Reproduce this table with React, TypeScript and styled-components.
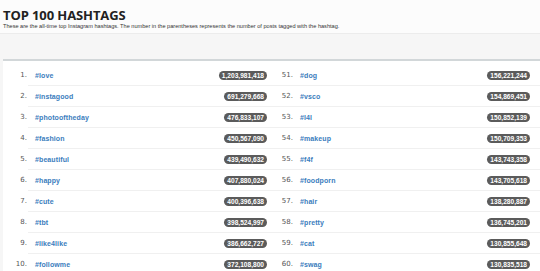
import React from 'react';
import styled, { createGlobalStyle } from 'styled-components';

const GlobalStyle = createGlobalStyle`
  html, body {
    margin: 0;
    padding: 0;
    background: #f6f6f6;
  }
  body {
    font-family: "DejaVu Sans", Verdana, sans-serif;
    overflow: hidden;
  }
`;

const Page = styled.div`
  width: 540px;
  height: 271px;
  overflow: hidden;
  background: #f6f6f6;
`;

const Header = styled.header`
  background: #fcfcfc;
  border-bottom: 1px solid #ececec;
  padding: 7px 3px 0;
  height: 26px;
`;

const Title = styled.h1`
  margin: 0;
  font-family: "Open Sans", "Noto Sans", sans-serif;
  font-weight: 700;
  font-size: 13px;
  line-height: 16px;
  color: #222;
  letter-spacing: -0.1px;
`;

const Subtitle = styled.p`
  margin: 0;
  font-family: "Liberation Sans", Arial, sans-serif;
  font-size: 5.6px;
  line-height: 7px;
  color: #333;
`;

const Body = styled.main`
  padding: 25px 0 0 3px;
`;

const Panel = styled.section`
  background: #fff;
  border-top: 2px solid #d2d7d9;
  display: grid;
  grid-template-columns: 267px 1fr;
  padding-top: 4px;
`;

const Column = styled.ol`
  list-style: none;
  margin: 0;
  padding: 0;
`;

const Row = styled.li<{ $side: 'left' | 'right' }>`
  display: flex;
  height: 21px;
  border-bottom: ${({ $side }) => ($side === 'right' ? '1px solid #f0f0f0' : 'none')};
  box-sizing: border-box;
`;

const Rank = styled.span<{ $side: 'left' | 'right' }>`
  width: ${({ $side }) => ($side === 'right' ? '23px' : '24px')};
  flex: none;
  text-align: right;
  font-size: 7px;
  color: #555;
  line-height: 21px;
`;

const Entry = styled.div<{ $side: 'left' | 'right' }>`
  flex: 1;
  display: flex;
  align-items: center;
  justify-content: space-between;
  margin-left: ${({ $side }) => ($side === 'right' ? '0' : '1px')};
  padding: ${({ $side }) => ($side === 'right' ? '0 10px 0 7px' : '0 3px 0 7px')};
  border-bottom: ${({ $side }) => ($side === 'left' ? '1px solid #f0f0f0' : 'none')};
`;

const Tag = styled.a`
  font-family: "Liberation Sans", Arial, sans-serif;
  font-size: 7px;
  font-weight: 700;
  color: #3b7dbd;
  text-decoration: none;
  letter-spacing: 0.1px;
`;

const Count = styled.span`
  background: #5b5b5b;
  color: #fff;
  font-family: "Liberation Sans", Arial, sans-serif;
  font-weight: 700;
  font-size: 6.6px;
  line-height: 9px;
  height: 9px;
  padding: 0 3px;
  border-radius: 5px;
`;

const left = [
  ['love', '1,203,981,418'],
  ['instagood', '691,279,668'],
  ['photooftheday', '476,833,107'],
  ['fashion', '450,567,090'],
  ['beautiful', '439,490,632'],
  ['happy', '407,880,024'],
  ['cute', '400,396,638'],
  ['tbt', '398,524,997'],
  ['like4like', '386,662,727'],
  ['followme', '372,108,800'],
];

const right = [
  ['dog', '156,221,244'],
  ['vsco', '154,869,451'],
  ['l4l', '150,852,139'],
  ['makeup', '150,709,353'],
  ['f4f', '143,743,358'],
  ['foodporn', '143,705,618'],
  ['hair', '138,280,887'],
  ['pretty', '136,745,201'],
  ['cat', '130,855,648'],
  ['swag', '130,835,518'],
];

const List = ({ items, start, side }: { items: string[][]; start: number; side: 'left' | 'right' }) => (
  <Column start={start}>
    {items.map(([tag, count], i) => (
      <Row key={tag} $side={side}>
        <Rank $side={side}>{start + i}.</Rank>
        <Entry $side={side}>
          <Tag href="#">#{tag}</Tag>
          <Count>{count}</Count>
        </Entry>
      </Row>
    ))}
  </Column>
);

export default function App() {
  return (
    <Page>
      <GlobalStyle />
      <Header>
        <Title>TOP 100 HASHTAGS</Title>
        <Subtitle>
          These are the all-time top Instagram hashtags. The number in the parentheses represents the number of posts
          tagged with the hashtag.
        </Subtitle>
      </Header>
      <Body>
        <Panel>
          <List items={left} start={1} side="left" />
          <List items={right} start={51} side="right" />
        </Panel>
      </Body>
    </Page>
  );
}
